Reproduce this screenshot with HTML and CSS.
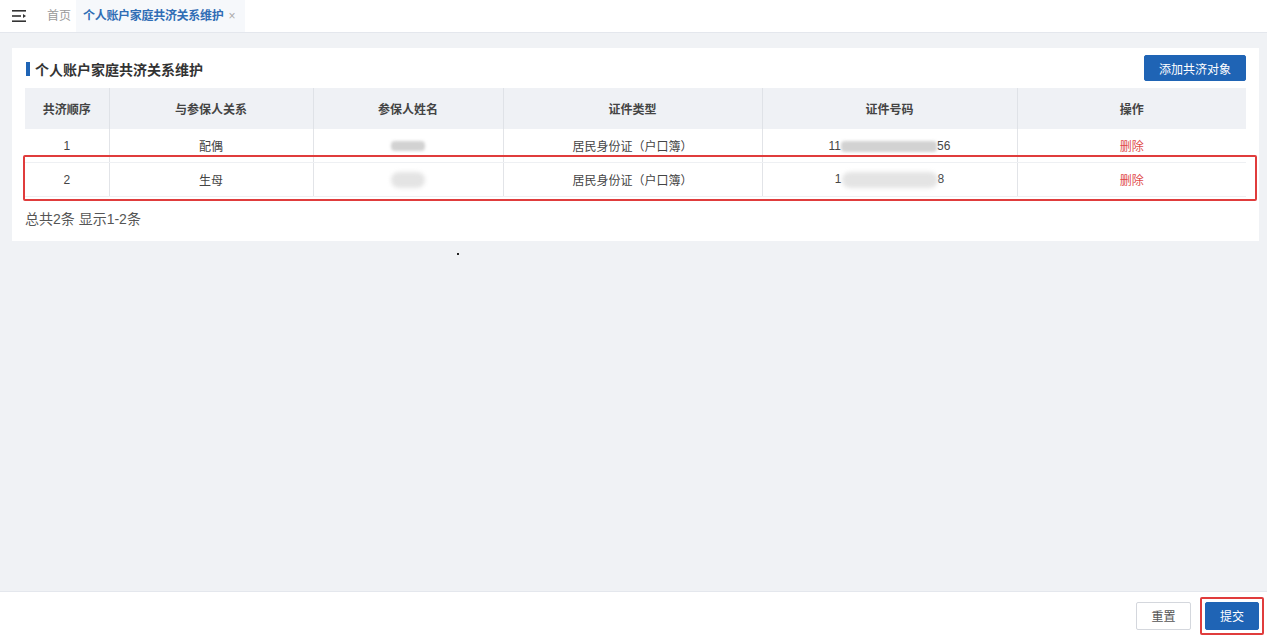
FILE: index.html
```html
<!DOCTYPE html>
<html lang="zh-CN">
<head>
  <meta charset="UTF-8">
  <title>个人账户家庭共济关系维护</title>
  <link rel="stylesheet" href="styles.css">
</head>
<body>

<!-- 顶部标签栏 -->
<div class="topbar">
  <span class="menu-icon">
    <svg width="15" height="12" viewBox="0 0 15 12">
      <rect x="0" y="0" width="14" height="1.6" fill="#333"/>
      <rect x="0" y="5.2" width="9" height="1.6" fill="#333"/>
      <path d="M11 4 L14 6 L11 8 Z" fill="#333"/>
      <rect x="0" y="10.4" width="14" height="1.6" fill="#333"/>
    </svg>
  </span>
  <span class="tab">首页</span>
  <span class="tab active">个人账户家庭共济关系维护 <i class="tab-close">×</i></span>
</div>

<!-- 主体 -->
<div class="main">
  <div class="card">
    <div class="card-head">
      <div class="card-title">个人账户家庭共济关系维护</div>
      <button class="btn btn-primary">添加共济对象</button>
    </div>

    <div class="table-wrap">
      <table class="grid">
        <colgroup>
          <col style="width:84px">
          <col style="width:204px">
          <col style="width:190px">
          <col style="width:259px">
          <col style="width:255px">
          <col>
        </colgroup>
        <thead>
          <tr>
            <th>共济顺序</th>
            <th>与参保人关系</th>
            <th>参保人姓名</th>
            <th>证件类型</th>
            <th>证件号码</th>
            <th>操作</th>
          </tr>
        </thead>
        <tbody>
          <tr>
            <td>1</td>
            <td>配偶</td>
            <td><span class="mask mask-name"></span></td>
            <td>居民身份证（户口簿）</td>
            <td>11<span class="mask mask-id"></span>56</td>
            <td><a class="del">删除</a></td>
          </tr>
          <tr>
            <td>2</td>
            <td>生母</td>
            <td><span class="mask mask-name light"></span></td>
            <td>居民身份证（户口簿）</td>
            <td>1<span class="mask mask-id light"></span>8</td>
            <td><a class="del">删除</a></td>
          </tr>
        </tbody>
      </table>
      <!-- 标注框 -->
      <div class="mark-row"></div>
    </div>

    <div class="pager">总共2条 显示1-2条</div>
  </div>
  <span class="dot"></span>
</div>

<!-- 底部操作栏 -->
<div class="footer">
  <button class="btn btn-default">重置</button>
  <span class="mark-btn"><button class="btn btn-primary btn-sm">提交</button></span>
</div>

</body>
</html>
```

FILE: styles.css
```css
body {
  margin: 0;
  height: 100vh;
  overflow: hidden;
  display: flex;
  flex-direction: column;
  background: #f0f2f5;
  font-family: "Liberation Sans", "Noto Sans CJK SC", sans-serif;
  font-size: 12px;
  color: #333;
}

/* 顶部 */
.topbar {
  height: 32px;
  background: #fff;
  border-bottom: 1px solid #e4e7ed;
  display: flex;
  align-items: center;
  flex-shrink: 0;
}

.menu-icon {
  width: 46px;
  padding-left: 12px;
  box-sizing: border-box;
  display: flex;
  align-items: center;
}

.tab {
  height: 32px;
  line-height: 32px;
  padding: 0 0 0 1px;
  font-size: 12px;
  color: #9a9a9a;
}

.tab.active {
  margin-left: 5px;
  padding: 0 10px 0 7px;
  background: #f6f8fb;
  color: #2f6db5;
  font-weight: bold;
  letter-spacing: -0.3px;
}

.tab-close {
  font-style: normal;
  font-weight: normal;
  color: #aaa;
  margin-left: 2px;
}

/* 主体 */
.main {
  flex: 1;
  padding: 15px 8px 0 12px;
  position: relative;
}

.card {
  background: #fff;
  padding: 7px 13px 13px 13px;
}

.card-head {
  display: flex;
  justify-content: space-between;
  align-items: center;
  height: 26px;
  margin-bottom: 7px;
}

.card-title {
  font-size: 14px;
  font-weight: bold;
  color: #333;
  display: flex;
  align-items: center;
  margin-top: 1px;
}

.card-title::before {
  content: '';
  width: 4px;
  height: 14px;
  background: #1f64b5;
  margin: 0 5px 0 1px;
}

.btn {
  font-family: "Liberation Sans", "Noto Sans CJK SC", sans-serif;
  font-size: 12px;
  border-radius: 2px;
  cursor: pointer;
}

.btn-primary {
  background: #1f64b5;
  border: 1px solid #1f64b5;
  color: #fff;
  height: 26px;
  padding: 0 14px;
}

.btn-sm {
  height: 28px;
  width: 54px;
  padding: 0;
}

.btn-default {
  background: #fff;
  border: 1px solid #d4d7dd;
  color: #555;
  height: 28px;
  width: 55px;
}

/* 表格 */
.table-wrap {
  position: relative;
}

.grid {
  width: 100%;
  border-collapse: collapse;
  table-layout: fixed;
}

.grid th {
  height: 41px;
  background: #eff1f5;
  font-weight: bold;
  color: #444;
  border-left: 1px solid #dfe2e7;
  padding: 0;
}

.grid td {
  height: 33px;
  text-align: center;
  color: #444;
  border-left: 1px solid #e2e4e8;
  border-bottom: 1px solid #eef0f3;
  padding: 0;
}

.grid tr th:first-child,
.grid tr td:first-child {
  border-left: none;
}

.del {
  color: #e04a4a;
}

.mask {
  display: inline-block;
  vertical-align: middle;
  background: #d2d2d2;
  filter: blur(1.5px);
  border-radius: 4px;
}

.mask.light {
  background: #e4e4e4;
  filter: blur(2px);
  border-radius: 10px;
}

.mask-name {
  width: 34px;
  height: 10px;
}

.mask-name.light {
  height: 16px;
}

.mask-id {
  width: 96px;
  height: 11px;
}

.mask-id.light {
  height: 16px;
}

.mark-row {
  position: absolute;
  left: -2px;
  right: -11px;
  top: 67px;
  height: 42px;
  border: 2px solid #e03c3c;
  border-radius: 2px;
  pointer-events: none;
}

.pager {
  font-size: 14px;
  color: #555;
  margin-top: 11px;
}

.dot {
  position: absolute;
  left: 457px;
  top: 220px;
  width: 2px;
  height: 2px;
  background: #222;
}

/* 底部 */
.footer {
  height: 47px;
  background: #fff;
  border-top: 1px solid #e4e7ed;
  display: flex;
  justify-content: flex-end;
  align-items: center;
  padding-right: 8px;
  gap: 14px;
  flex-shrink: 0;
}

.mark-btn {
  display: flex;
  padding: 3px;
  margin: -5px;
  border: 2px solid #e03c3c;
  border-radius: 2px;
}
```
